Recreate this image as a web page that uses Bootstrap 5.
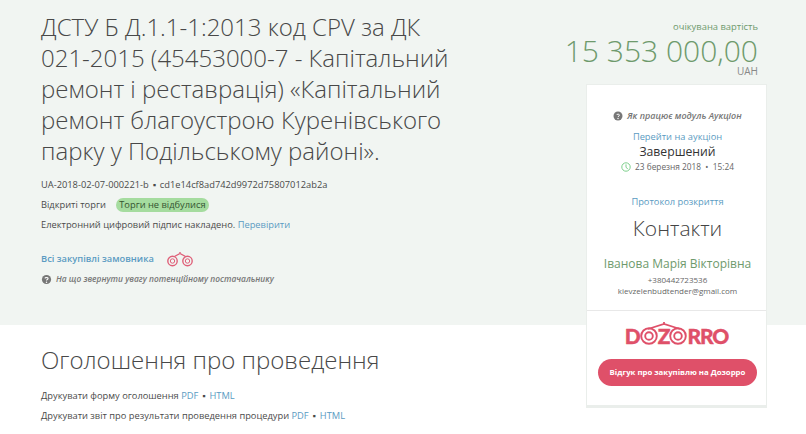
<!DOCTYPE html>
<html lang="uk"><head><meta charset="utf-8">
<link href="https://cdn.jsdelivr.net/npm/bootstrap@5.3.0/dist/css/bootstrap.min.css" rel="stylesheet">
<style>
html,body{height:434px;overflow:hidden}
body{font-family:"Open Sans",sans-serif;font-size:9.3px;color:#4a4a4a;background:#fff}
a{color:#5a9bc2;text-decoration:none}
.page-wrap{height:434px;background:linear-gradient(#f1f5f2 325px,#fff 325px);padding-left:41px}
.left-col{width:420px}
.right-col{width:181px;margin-left:125px}
.tender-title{font-weight:300;font-size:24px;line-height:31px;color:#484848;margin:11px 0 0}
.meta-line{line-height:20px;margin:0}
.meta-first{margin-top:9px}
.dot-sep{margin:0 1.5px}
.status-pill{background:#a5dc9f;color:#33532f;border-radius:8px;padding:0 3px;height:14px;line-height:14px;margin-left:8px;display:inline-block}
.buyer-row{margin-top:14px;height:20px}
.buyer-link{font-weight:600;font-size:9.3px}
.hint-line{font-style:italic;font-weight:600;color:#777;font-size:8.4px;line-height:20px}
.section-title{font-weight:300;font-size:24px;line-height:32px;color:#484848;margin:0 0 10px}
.section-gap{margin-top:55px}
.price-head{text-align:right;padding-right:9px;padding-top:20px;height:84px;margin-left:-30px}
.price-label{color:#6f9a6d;font-size:9.4px;line-height:14px}
.price-value{color:#6e9a6c;font-weight:300;font-size:30px;line-height:30px;margin-top:2px;white-space:nowrap}
.price-cur{color:#888;font-size:10px;line-height:10px;margin-top:0}
.side-card{width:181px;height:324px;background:#fff;border:1px solid #eaeeeb;border-bottom-width:3px;text-align:center;padding-left:2px}
.auction-hint{margin-top:24px;height:14px;line-height:14px;font-size:9px}
.auction-link{margin-top:7px;line-height:13px}
.auction-state{font-size:12.2px;line-height:16px;color:#333;margin-top:1px}
.auction-date{font-size:8.3px;line-height:14px;color:#666}
.protocol{margin-top:21px;line-height:14px}
.contacts-title{font-weight:300;font-size:21px;line-height:28px;color:#444;margin:5px 0 0}
.contact-name{color:#6e9a6c;font-size:12px;line-height:16px;margin-top:14px}
.contact-small{font-size:8px;line-height:11px;color:#666}
.first-small{margin-top:2px}
.dozorro-box{border-top:1px solid #e8e8e8;margin:14px 0 0 -2px;padding-top:12px}
.dozorro-logo{height:26px;color:#df5069;font-family:"Lato",sans-serif;font-weight:900;font-size:21px;line-height:26px;letter-spacing:-1.1px;-webkit-text-stroke:.35px #df5069}
.logo-inner{position:relative}
.logo-arch{position:absolute;left:50%;top:-1px;margin-left:-17px}
.review-btn{width:159px;height:27px;border-radius:14px;background:#df5069;color:#fff;font-weight:700;font-size:7.8px;line-height:27px;padding:0;border:0;margin:10px 0 0 2px}
</style></head>
<body>
<div class="page-wrap d-flex">
 <div class="left-col">
  <h1 class="tender-title">ДСТУ Б Д.1.1-1:2013 код CPV за ДК 021-2015 (45453000-7 - Капітальний ремонт і реставрація) «Капітальний ремонт благоустрою Куренівського парку у Подільському районі».</h1>
  <p class="meta-line meta-first">UA-2018-02-07-000221-b <span class="dot-sep">▪</span> cd1e14cf8ad742d9972d75807012ab2a</p>
  <p class="meta-line">Відкриті торги <span class="status-pill">Торги не відбулися</span></p>
  <p class="meta-line">Електронний цифровий підпис накладено. <a href="#">Перевірити</a></p>
  <div class="buyer-row d-flex align-items-center gap-2">
   <a class="buyer-link" href="#">Всі закупівлі замовника</a>
   <svg class="ms-1" width="28" height="16" viewBox="0 0 28 16" fill="none" stroke="#df6079" stroke-width="1.4"><circle cx="6.5" cy="10" r="4.7"/><circle cx="6.5" cy="10" r="2.2" stroke-width="1"/><circle cx="21.5" cy="10" r="4.7"/><circle cx="21.5" cy="10" r="2.2" stroke-width="1"/><path d="M8.5 5.5 14 2.5l5.5 3M14 1v2"/></svg>
  </div>
  <div class="hint-line d-flex align-items-center gap-1">
   <svg width="11" height="11" viewBox="0 0 12 12"><circle cx="6" cy="6" r="5" fill="#777"/><path d="M4.3 4.8C4.4 3.7 7.8 3.4 7.7 5c0 1.1-1.7 1-1.7 2.2" fill="none" stroke="#fff" stroke-width="1.2"/><circle cx="6" cy="9" r=".8" fill="#fff"/></svg>
   <span>На що звернути увагу потенційному постачальнику</span>
  </div>
  <div class="section-gap">
   <h2 class="section-title">Оголошення про проведення</h2>
   <p class="meta-line">Друкувати форму оголошення <a href="#">PDF</a> <span class="dot-sep">▪</span> <a href="#">HTML</a></p>
   <p class="meta-line">Друкувати звіт про результати проведення процедури <a href="#">PDF</a> <span class="dot-sep">▪</span> <a href="#">HTML</a></p>
  </div>
 </div>
 <div class="right-col flex-shrink-0">
  <div class="price-head">
   <div class="price-label">очікувана вартість</div>
   <div class="price-value">15 353 000,00</div>
   <div class="price-cur">UAH</div>
  </div>
  <div class="side-card">
   <div class="auction-hint hint-line d-flex align-items-center justify-content-center gap-1">
    <svg width="10" height="10" viewBox="0 0 12 12"><circle cx="6" cy="6" r="5.4" fill="#777"/><path d="M4.3 4.8C4.4 3.7 7.8 3.4 7.7 5c0 1.1-1.7 1-1.7 2.2" fill="none" stroke="#fff" stroke-width="1.2"/><circle cx="6" cy="9" r=".8" fill="#fff"/></svg>
    <span>Як працює модуль Аукціон</span>
   </div>
   <div class="auction-link"><a href="#">Перейти на аукціон</a></div>
   <div class="auction-state">Завершений</div>
   <div class="auction-date d-flex align-items-center justify-content-center gap-1">
    <svg width="10" height="10" viewBox="0 0 10 10" fill="none" stroke="#7ccf8b"><circle cx="5" cy="5" r="4.2"/><path d="M5 2.4V5.4L6.8 6.8"/></svg>
    <span>23 березня 2018 &nbsp;•&nbsp; 15:24</span>
   </div>
   <div class="protocol"><a href="#">Протокол розкриття</a></div>
   <h3 class="contacts-title">Контакти</h3>
   <div class="contact-name">Іванова Марія Вікторівна</div>
   <div class="contact-small first-small">+380442723536</div>
   <div class="contact-small">kievzelenbudtender@gmail.com</div>
   <div class="dozorro-box">
    <div class="dozorro-logo d-flex align-items-center justify-content-center">
     <span>D</span>
     <div class="logo-inner d-flex align-items-center">
      <svg class="logo-arch" width="34" height="8" viewBox="0 0 34 8" fill="none" stroke="#df5069" stroke-width="1.8"><path d="M1 7 17 2l16 5M17 0v3"/></svg>
      <svg width="18" height="18" viewBox="0 0 18 18" fill="none" stroke="#df5069" stroke-width="1.9"><circle cx="9" cy="9" r="7.8"/><circle cx="9" cy="9" r="3.8"/></svg>
      <span>Z</span>
      <svg width="18" height="18" viewBox="0 0 18 18" fill="none" stroke="#df5069" stroke-width="1.9"><circle cx="9" cy="9" r="7.8"/><circle cx="9" cy="9" r="3.8"/></svg>
     </div>
     <span>RRO</span>
    </div>
    <button class="btn review-btn" type="button">Відгук про закупівлю на Дозорро</button>
   </div>
  </div>
 </div>
</div>
<script src="https://cdn.jsdelivr.net/npm/bootstrap@5.3.0/dist/js/bootstrap.bundle.min.js"></script>
</body></html>
